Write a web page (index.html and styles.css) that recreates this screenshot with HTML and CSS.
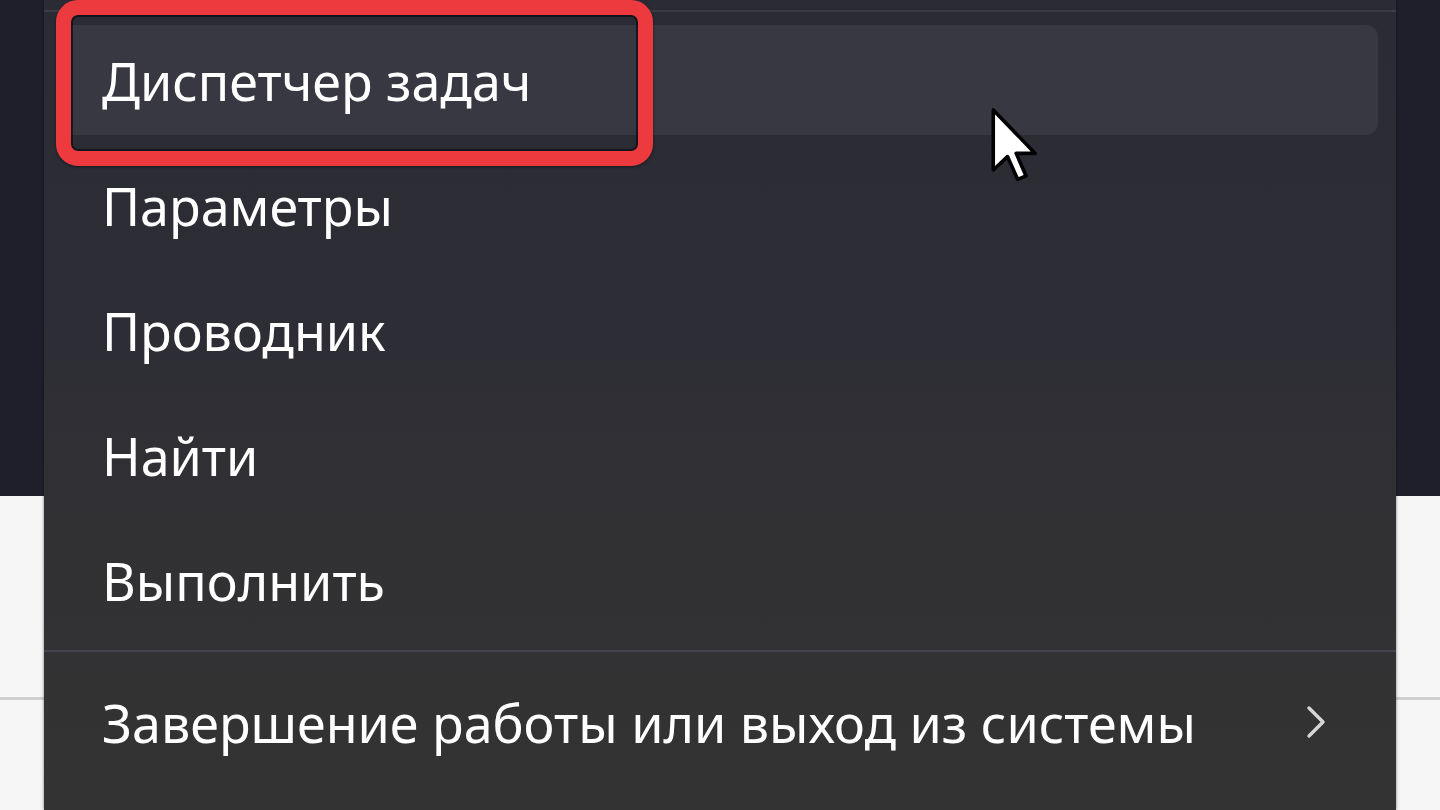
FILE: index.html
```html
<!DOCTYPE html>
<html lang="ru">
<head>
<meta charset="utf-8">
<title>Меню</title>
<link rel="stylesheet" href="styles.css">
</head>
<body>
<div class="stage">
  <div class="backdrop">
    <div class="bd-top"></div>
    <div class="bd-bottom"><div class="bd-line"></div></div>
  </div>
  <div class="menu">
    <div class="sep sep-top"></div>
    <div class="item hover">Диспетчер задач</div>
    <div class="item">Параметры</div>
    <div class="item">Проводник</div>
    <div class="item">Найти</div>
    <div class="item">Выполнить</div>
    <div class="sep"></div>
    <div class="item sub">
      <span>Завершение работы или выход из системы</span>
      <svg class="chev" viewBox="0 0 20 34" width="20" height="34"><path d="M3 3 L17 17 L3 31" fill="none" stroke="#d6d6d6" stroke-width="3.4" stroke-linecap="round" stroke-linejoin="round"/></svg>
    </div>
  </div>
  <div class="annot"></div>
  <svg class="cursor" viewBox="0 0 13 20" width="52" height="79"><path d="M1 1 L1 16.2 L4.6 12.8 L7.2 18.6 L9.3 17.7 L6.8 12 L11.6 12 Z" fill="#fff" stroke="#000" stroke-width="0.9" stroke-linejoin="round"/></svg>
</div>
</body>
</html>
```
FILE: styles.css
```css
html, body {
  margin: 0;
  padding: 0;
  width: 1440px;
  height: 810px;
  overflow: hidden;
  background: #1f1f2b;
}
.stage {
  position: relative;
  display: grid;
  width: 1440px;
  height: 810px;
  font-family: "Noto Sans", "Open Sans", sans-serif;
}
.backdrop, .menu {
  grid-area: 1 / 1;
}
.backdrop {
  display: flex;
  flex-direction: column;
}
.bd-top {
  height: 496px;
  background: #1f1f2c;
}
.bd-bottom {
  flex: 1;
  background: #f6f6f6;
  padding-top: 201px;
}
.bd-line {
  height: 3px;
  background: #cfcfcf;
}
.menu {
  margin-left: 44px;
  width: 1352px;
  height: 810px;
  padding-top: 10px;
  box-sizing: border-box;
  background: linear-gradient(180deg, #2b2b36 0%, #2d2d35 40%, #313134 65%, #333333 100%);
  box-shadow: 0 0 3px rgba(0,0,0,.5);
  display: flex;
  flex-direction: column;
}
.sep {
  height: 2px;
  background: #45454d;
  margin: 15px 0 15px;
}
.sep-top {
  margin: 0 0 13px;
  background: #3b3b46;
}
.item {
  height: 110px;
  margin: 0 18px 15px 18px;
  padding-left: 40px;
  padding-right: 52px;
  border-radius: 12px;
  display: flex;
  align-items: center;
  color: #ffffff;
  font-size: 52px;
  letter-spacing: 0;
  flex-shrink: 0;
}
.item.hover {
  background: #383843;
}
.item:nth-child(6) {
  margin-bottom: 0;
}
.sub {
  justify-content: space-between;
}
.chev {
  display: block;
}
.annot {
  position: absolute;
  left: 56px;
  top: 0;
  width: 597px;
  height: 166px;
  box-sizing: border-box;
  border: 15px solid #ec3a3f;
  border-radius: 22px;
  box-shadow: inset 0 0 0 2px rgba(10,10,16,.7), 0 1px 3px rgba(0,0,0,.5);
}
.cursor {
  position: absolute;
  left: 989px;
  top: 106px;
}
```
